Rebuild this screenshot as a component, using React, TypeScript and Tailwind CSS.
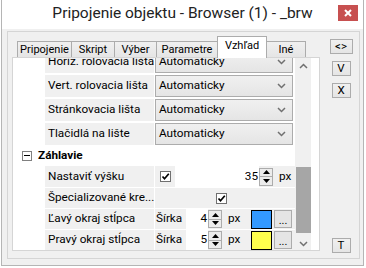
import React from "react";

const font = { fontFamily: '"Segoe UI", Roboto, "Noto Sans", sans-serif' };

function Chevron() {
    return (
        <svg width="9" height="6" viewBox="0 0 9 6" className="shrink-0">
            <path d="M1 1 L4.5 4.5 L8 1" fill="none" stroke="#707070" strokeWidth="1.5" />
        </svg>
    );
}

function Check() {
    return (
        <div className="w-[11px] h-[11px] border border-[#707070] bg-white flex items-center justify-center">
            <svg width="9" height="9" viewBox="0 0 9 9">
                <path d="M1.5 4.5 L3.5 6.8 L7.8 1.8" fill="none" stroke="#000" strokeWidth="1.7" />
            </svg>
        </div>
    );
}

function Spinner() {
    return (
        <div className="w-[14px] h-[18px] border border-[#acacac] bg-[#ececec] flex flex-col">
            <div className="flex-1 flex items-center justify-center border-b border-[#acacac]">
                <svg width="7" height="4" viewBox="0 0 7 4">
                    <path d="M0 4 L3.5 0 L7 4 Z" fill="#000" />
                </svg>
            </div>
            <div className="flex-1 flex items-center justify-center">
                <svg width="7" height="4" viewBox="0 0 7 4">
                    <path d="M0 0 L3.5 4 L7 0 Z" fill="#000" />
                </svg>
            </div>
        </div>
    );
}

function Combo() {
    return (
        <div className="w-[138px] h-full border border-[#acacac] bg-gradient-to-b from-[#f0f0f0] to-[#e5e5e5] flex items-center justify-between pl-[3px] pr-[6px]">
            <span>Automaticky</span>
            <Chevron />
        </div>
    );
}

function Row({ label, h, children }: { label: string; h: string; children?: React.ReactNode }) {
    return (
        <div className={`flex ${h}`}>
            <div className="w-[32px]" />
            <div className="w-[109px] bg-[#f0f0f0] pl-[3px] flex items-center whitespace-nowrap overflow-hidden">
                {label}
            </div>
            <div className="ml-[1px] w-[140px] flex items-stretch">{children}</div>
        </div>
    );
}

function WidthRow({ label, value, color }: { label: string; value: string; color: string }) {
    return (
        <Row label={label} h="h-[20px]">
            <div className="flex-1 bg-[#f0f0f0] flex items-center">
                <span className="w-[31px] pl-[1px]">Šírka</span>
                <div className="w-[22px] h-full bg-white flex items-center justify-end pr-[1px]">{value}</div>
                <Spinner />
                <span className="ml-[6px] w-[23px]">px</span>
                <div className={`w-[21px] h-[19px] border border-black ${color}`} />
                <div className="ml-[2px] w-[18px] h-[18px] border border-[#acacac] bg-[#e5e5e5] flex items-end justify-center leading-[12px] text-[11px]">
                    ...
                </div>
            </div>
        </Row>
    );
}

function Tab({ label, w, active }: { label: string; w: string; active?: boolean }) {
    return (
        <div
            className={`${w} -ml-px first:ml-0 border border-b-0 border-[#acacac] flex justify-center whitespace-nowrap text-[11px] ${
                active
                    ? "h-[22px] bg-white items-start pt-[3px] relative z-10 -mb-px"
                    : "h-[16px] bg-gradient-to-b from-[#f0f0f0] to-[#e5e5e5] items-center"
            }`}
        >
            {label}
        </div>
    );
}

function SideButton({ label, w, cls }: { label: string; w: string; cls?: string }) {
    return (
        <div
            className={`${w} h-[15px] border border-[#acacac] bg-gradient-to-b from-[#f0f0f0] to-[#e5e5e5] flex items-center justify-center text-[11.5px] ${cls ?? ""}`}
        >
            {label}
        </div>
    );
}

export default function App() {
    return (
        <div className="w-[366px] h-[268px] bg-white text-[11.75px] text-black leading-none" style={font}>
            <div className="ml-px w-[363px] h-[266px] border border-t-0 border-[#b5b5b5] bg-[#f0f0f0] flex flex-col">
                <div className="h-[29px] bg-white relative flex items-center justify-center text-[15.5px] text-[#222]">
                    <span className="pb-[1px]">Pripojenie objektu - Browser (1) - _brw</span>
                    <div className="absolute right-[5px] top-[5px] w-[20px] h-[16px] bg-[#c75050] flex items-center justify-center">
                        <svg width="8" height="8" viewBox="0 0 8 8">
                            <path d="M1 1 L7 7 M7 1 L1 7" stroke="#fff" strokeWidth="2" />
                        </svg>
                    </div>
                </div>
                <div className="pt-[2px] pl-[5px]">
                    <div className="w-[353px] h-[228px] border border-[#d5d5d5] flex">
                        <div className="ml-[4px] mt-[4px] w-[308px] flex flex-col">
                            <div className="h-[21px] flex items-end pl-[5px]">
                                <Tab label="Pripojenie" w="w-[55px]" />
                                <Tab label="Skript" w="w-[44px]" />
                                <Tab label="Výber" w="w-[43px]" />
                                <Tab label="Parametre" w="w-[62px]" />
                                <Tab label="Vzhľad" w="w-[50px]" active />
                                <Tab label="Iné" w="w-[40px]" />
                            </div>
                            <div className="h-[194px] border border-[#d5d5d5] bg-white flex">
                                <div className="w-[282px] flex flex-col">
                                    <div className="h-[15px] overflow-hidden">
                                        <div className="-mt-[7px]">
                                            <Row label="Horiz. rolovacia lišta" h="h-[22px]">
                                                <Combo />
                                            </Row>
                                        </div>
                                    </div>
                                    <div className="mt-[2px]">
                                        <Row label="Vert. rolovacia lišta" h="h-[22px]">
                                            <Combo />
                                        </Row>
                                    </div>
                                    <div className="mt-[2px]">
                                        <Row label="Stránkovacia lišta" h="h-[22px]">
                                            <Combo />
                                        </Row>
                                    </div>
                                    <div className="mt-[2px]">
                                        <Row label="Tlačidlá na lište" h="h-[22px]">
                                            <Combo />
                                        </Row>
                                    </div>
                                    <div className="h-[21px] flex items-center">
                                        <div className="ml-[9px] w-[10px] h-[10px] border border-[#808080] bg-white flex items-center justify-center">
                                            <div className="w-[6px] h-px bg-black" />
                                        </div>
                                        <span className="ml-[6px] font-bold">Záhlavie</span>
                                    </div>
                                    <Row label="Nastaviť výšku" h="h-[21px]">
                                        <div className="flex-1 bg-[#f0f0f0] flex items-center">
                                            <div className="ml-[5px]">
                                                <Check />
                                            </div>
                                            <div className="ml-[4px] w-[84px] h-full bg-white flex items-center justify-end pr-[1px]">
                                                35
                                            </div>
                                            <Spinner />
                                            <span className="ml-[6px]">px</span>
                                        </div>
                                    </Row>
                                    <div className="mt-px">
                                        <Row label="Špecializované kre..." h="h-[20px]">
                                            <div className="flex-1 bg-[#f0f0f0] flex items-center justify-center pr-[8px]">
                                                <Check />
                                            </div>
                                        </Row>
                                    </div>
                                    <div className="mt-px">
                                        <WidthRow label="Ľavý okraj stĺpca" value="4" color="bg-[#3399ff]" />
                                    </div>
                                    <div className="mt-px">
                                        <WidthRow label="Pravý okraj stĺpca" value="5" color="bg-[#ffff4d]" />
                                    </div>
                                </div>
                                <div className="w-[16px] bg-[#f0f0f0] flex flex-col items-center">
                                    <svg width="9" height="6" viewBox="0 0 9 6" className="mt-[5px]">
                                        <path d="M1 5 L4.5 1.5 L8 5" fill="none" stroke="#707070" strokeWidth="1.5" />
                                    </svg>
                                    <div className="mt-[98px] w-[15px] h-[66px] bg-[#a6a6a6]" />
                                    <svg width="9" height="6" viewBox="0 0 9 6" className="mt-[8px]">
                                        <path d="M1 1 L4.5 4.5 L8 1" fill="none" stroke="#707070" strokeWidth="1.5" />
                                    </svg>
                                </div>
                            </div>
                        </div>
                        <div className="w-[34px] ml-[4px] flex flex-col items-center pt-[7px] pb-[5px]">
                            <SideButton label="<>" w="w-[23px]" />
                            <SideButton label="V" w="w-[19px]" cls="mt-[7px]" />
                            <SideButton label="X" w="w-[19px]" cls="mt-[7px]" />
                            <SideButton label="T" w="w-[19px]" cls="mt-auto" />
                        </div>
                    </div>
                </div>
            </div>
        </div>
    );
}
